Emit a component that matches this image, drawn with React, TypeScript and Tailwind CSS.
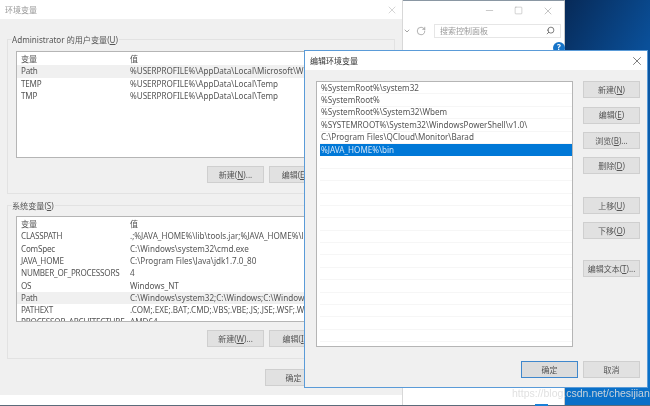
import { X, Minus, Square, RotateCw, ChevronDown, Search } from "lucide-react";

const userVars = [
  ["Path", "%USERPROFILE%\\AppData\\Local\\Microsoft\\WindowsApps;"],
  ["TEMP", "%USERPROFILE%\\AppData\\Local\\Temp"],
  ["TMP", "%USERPROFILE%\\AppData\\Local\\Temp"],
];

const sysVars = [
  ["CLASSPATH", ".;%JAVA_HOME%\\lib\\tools.jar;%JAVA_HOME%\\lib\\dt.jar"],
  ["ComSpec", "C:\\Windows\\system32\\cmd.exe"],
  ["JAVA_HOME", "C:\\Program Files\\Java\\jdk1.7.0_80"],
  ["NUMBER_OF_PROCESSORS", "4"],
  ["OS", "Windows_NT"],
  ["Path", "C:\\Windows\\system32;C:\\Windows;C:\\Windows\\System32\\Wbem"],
  ["PATHEXT", ".COM;.EXE;.BAT;.CMD;.VBS;.VBE;.JS;.JSE;.WSF;.WSH"],
  ["PROCESSOR_ARCHITECTURE", "AMD64"],
];

const pathRows = [
  "%SystemRoot%\\system32",
  "%SystemRoot%",
  "%SystemRoot%\\System32\\Wbem",
  "%SYSTEMROOT%\\System32\\WindowsPowerShell\\v1.0\\",
  "C:\\Program Files\\QCloud\\Monitor\\Barad",
  "%JAVA_HOME%\\bin",
];

// Label with the shortcut letter underlined, e.g. 新建(N)...
function Btn({ label, hot, tail = "", primary = false, className = "" }: { label: string; hot?: string; tail?: string; primary?: boolean; className?: string }) {
  return (
    <div
      className={`flex h-[17px] w-[57px] shrink-0 items-center justify-center whitespace-nowrap border text-[8px] text-[#555] ${
        primary ? "border-[#3f87cc] bg-[#dcdcdc]" : "border-[#cfcfcf] bg-[#e1e1e1]"
      } ${className}`}
    >
      {label}
      {hot && (
        <>
          (<span className="underline">{hot}</span>)
        </>
      )}
      {tail}
    </div>
  );
}

function VarTable({ rows, selected, className }: { rows: string[][]; selected: number; className: string }) {
  return (
    <div className={`overflow-hidden border border-[#b5b5b5] bg-white pt-[1px] ${className}`}>
      <Row name="变量" value="值" />
      {rows.map((r, i) => (
        <Row key={r[0]} name={r[0]} value={r[1]} active={i === selected} />
      ))}
    </div>
  );
}

function Row({ name, value, active = false }: { name: string; value: string; active?: boolean }) {
  return (
    <div className={`flex h-[12.3px] items-center whitespace-nowrap text-[8.1px] leading-none text-[#555] ${active ? "bg-[#f0f0f0]" : ""}`}>
      <span className="w-[113px] shrink-0 pl-[4px] tracking-[-0.2px]">{name}</span>
      <span>{value}</span>
    </div>
  );
}

function GroupBox({ title, hot, className, children }: { title: string; hot: string; className: string; children: React.ReactNode }) {
  return (
    <div className={`relative border border-[#e2e2e2] ${className}`}>
      <div className="absolute left-[4px] top-[-7px] whitespace-nowrap bg-[#f0f0f0] pr-[1px] text-[8.1px] leading-[13px] text-[#555]">
        {title}(<span className="underline">{hot}</span>)
      </div>
      {children}
    </div>
  );
}

export default function App() {
  return (
    <div
      className="relative h-[406px] w-[650px] overflow-hidden bg-[linear-gradient(120deg,#072a58_64%,#0a4f98_76%,#0a70c8_90%)] blur-[0.35px]"
      style={{ fontFamily: '"Noto Sans", "Noto Sans CJK SC", sans-serif' }}
    >
      {/* control panel window behind the dialogs */}
      <div className="absolute left-[403px] top-0 flex h-[405px] w-[162px] flex-col border-r border-t border-r-[#c8c8c8] border-t-[#8a97a3] bg-white">
        <div className="flex h-[19px] items-center justify-end gap-[19px] pr-[10px] text-[#8a8a8a]">
          <Minus size={11} strokeWidth={1} />
          <Square size={9} strokeWidth={1} />
          <X size={12} strokeWidth={1} />
        </div>
        <div className="mt-[4px] flex h-[13px] items-center">
          <ChevronDown size={8} className="text-[#777]" />
          <RotateCw size={10} strokeWidth={1.2} className="ml-[5px] text-[#666]" />
          <div className="ml-[8px] flex h-[14px] w-[127px] items-center justify-between border border-[#e6e6e6] px-[5px] text-[8px] text-[#9a9a9a]">
            搜索控制面板
            <Search size={9} className="-scale-x-100 text-[#555]" />
          </div>
        </div>
      </div>
      <div className="absolute left-[553px] top-[42px] flex h-[12px] w-[12px] items-start justify-center rounded-full bg-[#1573c8] text-[8px] font-bold leading-[10px] text-white">
        ?
      </div>

      {/* 环境变量 dialog */}
      <div className="absolute left-0 top-0 h-[405px] w-[403px] border-r border-[#d8d8d8] bg-white">
        <div className="flex h-[395px] flex-col bg-[#f0f0f0]">
          <div className="flex h-[19px] shrink-0 items-center justify-between bg-white pl-[5px] pr-[4px] text-[8px] text-[#999]">
            环境变量
            <X size={12} strokeWidth={1} className="text-[#aaa]" />
          </div>
          <div className="flex flex-col px-[7px] pt-[20px]">
            <GroupBox title="Administrator 的用户变量" hot="U" className="h-[155px] px-[8px] pt-[11px]">
              <VarTable rows={userVars} selected={0} className="h-[107px]" />
              <div className="mt-[8px] flex gap-[5px] pl-[191px]">
                <Btn label="新建" hot="N" tail="..." />
                <Btn label="编辑" hot="E" tail="..." />
              </div>
            </GroupBox>
            <GroupBox title="系统变量" hot="S" className="mt-[11px] h-[154px] px-[8px] pt-[10px]">
              <VarTable rows={sysVars} selected={5} className="h-[106px]" />
              <div className="mt-[8px] flex gap-[5px] pl-[191px]">
                <Btn label="新建" hot="W" tail="..." />
                <Btn label="编辑" hot="I" tail="..." />
              </div>
            </GroupBox>
            <div className="mt-[10px] flex pl-[258px]">
              <Btn label="确定" />
            </div>
          </div>
        </div>
      </div>

      {/* 编辑环境变量 dialog */}
      <div className="absolute left-[304px] top-[50px] flex h-[338px] w-[344px] flex-col border border-[#5a9bd8] bg-[#f0f0f0]">
        <div className="flex h-[19px] shrink-0 items-center justify-between bg-white pl-[5px] pr-[3px] text-[8px] text-[#333]">
          编辑环境变量
          <X size={14} strokeWidth={1} className="text-[#222]" />
        </div>
        <div className="flex gap-[10px] pl-[11px] pt-[11px]">
          <div className="h-[266px] w-[257px] border border-[#b5b5b5] bg-white pl-[3px]">
            {Array.from({ length: 21 }, (_, i) => (
              <div
                key={i}
                className={`flex h-[12.4px] items-center whitespace-nowrap border-b pl-[1px] text-[8.1px] leading-none ${
                  i === 5 ? "border-[#0078d7] bg-[#0078d7] text-[#cfe4f7]" : "border-[#f6f6f6] text-[#555]"
                }`}
              >
                {pathRows[i]}
              </div>
            ))}
          </div>
          <div className="flex flex-col">
            <Btn label="新建" hot="N" />
            <Btn label="编辑" hot="E" className="mt-[8.5px]" />
            <Btn label="浏览" hot="B" tail="..." className="mt-[8.5px]" />
            <Btn label="删除" hot="D" className="mt-[8px]" />
            <Btn label="上移" hot="U" className="mt-[23px]" />
            <Btn label="下移" hot="O" className="mt-[8px]" />
            <Btn label="编辑文本" hot="T" tail="..." className="mt-[21px]" />
          </div>
        </div>
        <div className="mt-[14px] flex justify-end gap-[5px] pr-[7px]">
          <Btn label="确定" primary />
          <Btn label="取消" />
        </div>
      </div>

      {/* taskbar edge and watermark */}
      <div className="absolute inset-x-0 bottom-0 h-px bg-[#5b6b7a]" />
      <div className="absolute bottom-0 left-[535px] h-[2px] w-[13px] bg-[#1a7fd6]" />
      <div className="absolute left-[512px] top-[387px] whitespace-nowrap text-[10.5px] leading-[13px] text-[#dddddd]/90" style={{ fontFamily: '"Liberation Sans", sans-serif' }}>
        https://blog.csdn.net/chesijian
      </div>
    </div>
  );
}
